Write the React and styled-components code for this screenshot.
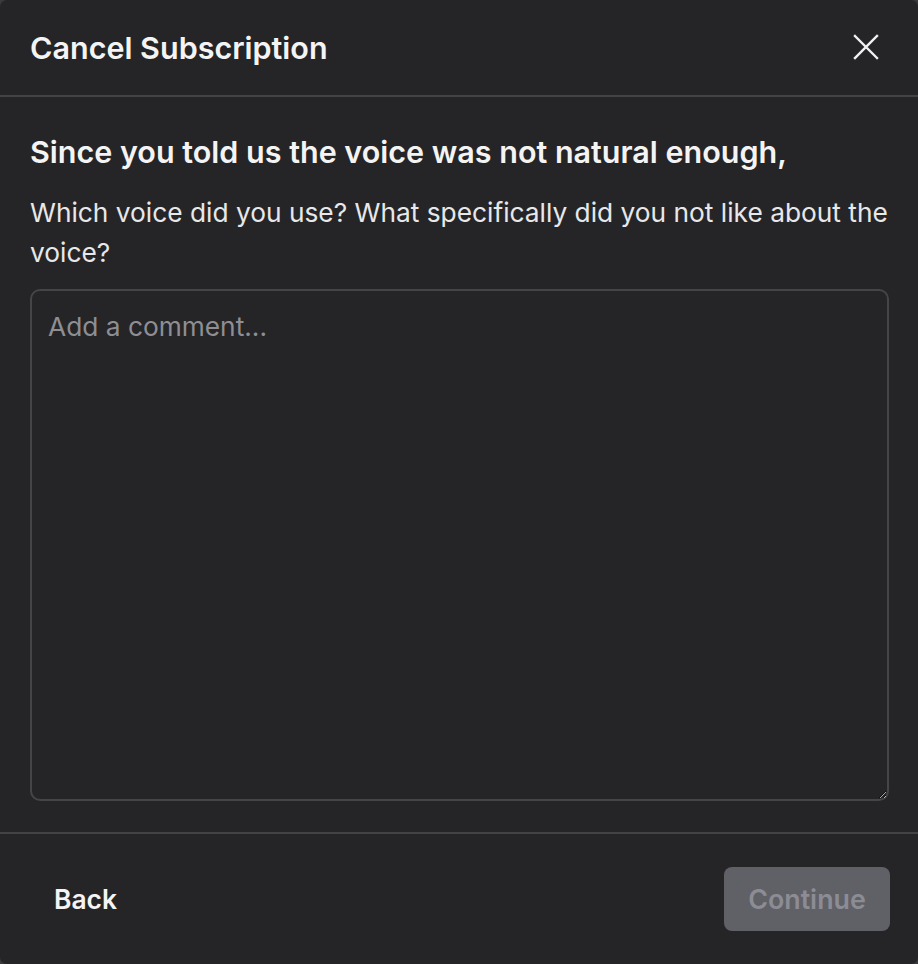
import styled, { createGlobalStyle } from "styled-components";

const Global = createGlobalStyle`
    html, body {
        margin: 0;
        padding: 0;
        background: #3a3a3c;
    }
    * {
        box-sizing: border-box;
    }
`;

function App() {
    return (
        <>
            <Global />
            <Modal>
                <Header>
                    <Title>Cancel Subscription</Title>
                    <CloseButton aria-label="Close">
                        <svg width="26" height="26" viewBox="0 0 26 26">
                            <path
                                d="M2 2 L24 24 M24 2 L2 24"
                                stroke="#f2f2f2"
                                strokeWidth="2.4"
                                strokeLinecap="square"
                            />
                        </svg>
                    </CloseButton>
                </Header>

                <Body>
                    <Heading>Since you told us the voice was not natural enough,</Heading>
                    <Question>
                        Which voice did you use? What specifically did you not like about the voice?
                    </Question>
                    <Comment placeholder="Add a comment..." />
                </Body>

                <Footer>
                    <BackButton>Back</BackButton>
                    <ContinueButton disabled>Continue</ContinueButton>
                </Footer>
            </Modal>
        </>
    );
}
export default App;

const Modal = styled.div`
    display: flex;
    flex-direction: column;
    width: 918px;
    height: 964px;
    background-color: #252527;
    border-radius: 7px;
    font-family: Inter, "Liberation Sans", sans-serif;
    color: #f4f4f5;
    overflow: hidden;
`;

const Header = styled.div`
    display: flex;
    align-items: center;
    justify-content: space-between;
    height: 97px;
    padding: 0 39px 1px 30px;
    border-bottom: 2px solid #434345;
`;

const Title = styled.h2`
    margin: 0;
    font-size: 30.5px;
    font-weight: 600;
`;

const CloseButton = styled.button`
    display: flex;
    padding: 0;
    border: none;
    background: transparent;
    cursor: pointer;
`;

const Body = styled.div`
    display: flex;
    flex-direction: column;
    padding: 36px 29px 31px 30px;
    border-bottom: 2px solid #434345;
`;

const Heading = styled.h3`
    margin: 0 0 22px;
    font-size: 30.5px;
    font-weight: 600;
    line-height: 38px;
`;

const Question = styled.p`
    margin: 0 0 16px;
    font-size: 26.3px;
    line-height: 40px;
    color: #e8e8ea;
`;

const Comment = styled.textarea`
    width: 100%;
    height: 512px;
    padding: 17px 16px;
    border: 2px solid #454547;
    border-radius: 10px;
    background: transparent;
    color: #f4f4f5;
    font-family: Inter, "Liberation Sans", sans-serif;
    font-size: 26.3px;
    line-height: 38px;
    outline: none;
    &::placeholder {
        color: #8e8e93;
    }
`;

const Footer = styled.div`
    display: flex;
    align-items: center;
    justify-content: space-between;
    flex: 1;
    padding: 0 28px 0 30px;
`;

const BackButton = styled.button`
    padding: 14px 24px;
    border: none;
    background: transparent;
    color: #f4f4f5;
    font-family: inherit;
    font-size: 26.4px;
    font-weight: 600;
    cursor: pointer;
`;

const ContinueButton = styled.button`
    width: 166px;
    height: 64px;
    border: none;
    border-radius: 8px;
    background-color: #606067;
    color: #8c8c94;
    font-family: inherit;
    font-size: 26.8px;
    font-weight: 600;
`;
